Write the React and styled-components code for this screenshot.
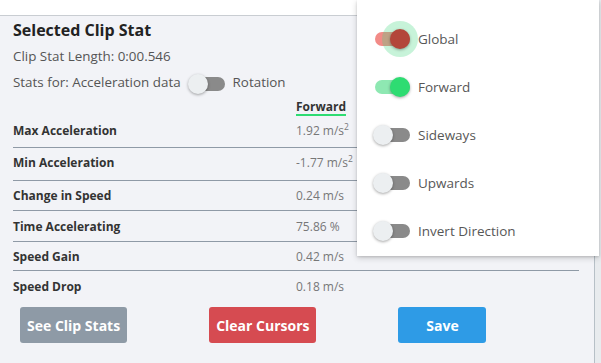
import React from 'react';
import styled, { createGlobalStyle } from 'styled-components';

const GlobalStyle = createGlobalStyle`
  html, body {
    margin: 0;
    padding: 0;
    background: #f2f3f7;
  }
  body {
    font-family: "Open Sans", "Noto Sans", "Liberation Sans", sans-serif;
    color: #333;
  }
  * {
    box-sizing: border-box;
  }
`

const Page = styled.div`
  position: relative;
  display: flex;
  width: 601px;
  height: 363px;
  overflow: hidden;
`

const Main = styled.div`
  width: 595px;
  display: flex;
  flex-direction: column;
  border-right: 1px solid #b7c0c7;
`

const Gutter = styled.div`
  flex: 1;
  background: #e8ebee;
`

const TopBar = styled.div`
  height: 16px;
  background: #fff;
  border-bottom: 1px solid #c9cdd2;
`

const Panel = styled.div`
  flex: 1;
  background: #f2f3f7;
  padding: 3px 0 0 13px;
`

const Title = styled.h3`
  margin: 0;
  font-size: 16px;
  line-height: 22px;
  font-weight: 700;
  color: #222;
`

const Info = styled.div`
  display: flex;
  align-items: center;
  height: 20px;
  font-size: 13.4px;
  color: #555;
  margin-top: ${p => p.gap || 0}px;
`

const Track = styled.span`
  position: relative;
  display: inline-block;
  width: 35px;
  height: 14px;
  border-radius: 7px;
  background: ${p => p.color || '#8a8a8a'};
  margin: ${p => p.mt || 0}px ${p => p.mr || 8}px 0 ${p => p.ml || 0}px;
  flex-shrink: 0;
`

const Knob = styled.span`
  position: absolute;
  top: -3px;
  left: ${p => (p.on ? 15 : -2)}px;
  width: 20px;
  height: 20px;
  border-radius: 50%;
  background: ${p => p.color || '#eceff1'};
  box-shadow: 0 1px 3px rgba(0, 0, 0, 0.35);
`

const Halo = styled.span`
  position: absolute;
  top: -11px;
  left: 7px;
  width: 36px;
  height: 36px;
  border-radius: 50%;
  background: rgba(70, 215, 130, 0.3);
`

const Table = styled.div`
  width: 566px;
  margin-top: 5px;
`

const HeadRow = styled.div`
  display: grid;
  grid-template-columns: 283px 1fr;
  height: 19px;
  padding-top: 2px;
`

const HeadCell = styled.span`
  justify-self: start;
  font-size: 12px;
  line-height: 15px;
  font-weight: 700;
  color: #333;
  border-bottom: 2px solid #2edc72;
  width: 50px;
  height: 17px;
`

const Row = styled.div`
  display: grid;
  grid-template-columns: 283px 1fr;
  align-items: center;
  height: ${p => p.h}px;
  padding-bottom: ${p => (p.sq ? 3 : 0)}px;
  border-bottom: ${p => (p.last ? 'none' : '1px solid #8f9aa6')};
`

const Label = styled.span`
  font-size: 12px;
  font-weight: 700;
  color: #333;
`

const Value = styled.span`
  font-size: 12px;
  color: #777;
  sup {
    font-size: 8.5px;
    vertical-align: 5px;
    line-height: 0;
  }
`

const Buttons = styled.div`
  display: flex;
  gap: 82px;
  margin: 6px 0 0 7px;
`

const Button = styled.button`
  height: 36px;
  min-width: ${p => p.w}px;
  border: none;
  border-radius: 3px;
  background: ${p => p.bg};
  color: #fff;
  font-family: inherit;
  font-size: 14px;
  font-weight: 700;
  padding: 0 7px;
`

const Menu = styled.div`
  position: absolute;
  top: 0;
  left: 357px;
  width: 242px;
  height: 256px;
  padding-top: 15px;
  background: #fff;
  box-shadow: 0 2px 6px rgba(0, 0, 0, 0.18), 0 1px 2px rgba(0, 0, 0, 0.12);
`

const MenuItem = styled.div`
  display: flex;
  align-items: center;
  height: 48px;
  padding-left: 18px;
  font-size: 13.5px;
  color: #575757;
`

const rows = [
  ['Max Acceleration', '1.92 m/s', true, 32],
  ['Min Acceleration', '-1.77 m/s', true, 33],
  ['Change in Speed', '0.24 m/s', false, 30],
  ['Time Accelerating', '75.86 %', false, 31],
  ['Speed Gain', '0.42 m/s', false, 29],
  ['Speed Drop', '0.18 m/s', false, 30],
]

const options = [
  { name: 'Global', on: true, track: '#f28b87', knob: '#b3463a', halo: true },
  { name: 'Forward', on: true, track: '#8ee8b2', knob: '#2edc72' },
  { name: 'Sideways' },
  { name: 'Upwards' },
  { name: 'Invert Direction' },
]

function Switch({ on, track, knob, halo, ml, mr, mt }) {
  return (
    <Track color={track} ml={ml} mr={mr} mt={mt}>
      {halo && <Halo />}
      <Knob on={on} color={knob} />
    </Track>
  )
}

export default function App() {
  return (
    <Page>
      <GlobalStyle />
      <Main>
        <TopBar />
        <Panel>
          <Title>Selected Clip Stat</Title>
          <Info gap={5}>Clip Stat Length: 0:00.546</Info>
          <Info gap={6}>
            Stats for: Acceleration data
            <Switch ml={9} mr={8} mt={4} />
            Rotation
          </Info>
          <Table>
            <HeadRow>
              <span />
              <HeadCell>Forward</HeadCell>
            </HeadRow>
            {rows.map(([label, value, sq, h], i) => (
              <Row key={label} h={h} sq={sq} last={i === rows.length - 1}>
                <Label>{label}</Label>
                <Value>
                  {value}
                  {sq && <sup>2</sup>}
                </Value>
              </Row>
            ))}
          </Table>
          <Buttons>
            <Button bg="#8e9aa6" w={107}>See Clip Stats</Button>
            <Button bg="#d64b51" w={107}>Clear Cursors</Button>
            <Button bg="#2e9be6" w={88}>Save</Button>
          </Buttons>
        </Panel>
      </Main>
      <Gutter />
      <Menu>
        {options.map(o => (
          <MenuItem key={o.name}>
            <Switch {...o} mr={8} />
            {o.name}
          </MenuItem>
        ))}
      </Menu>
    </Page>
  )
}
